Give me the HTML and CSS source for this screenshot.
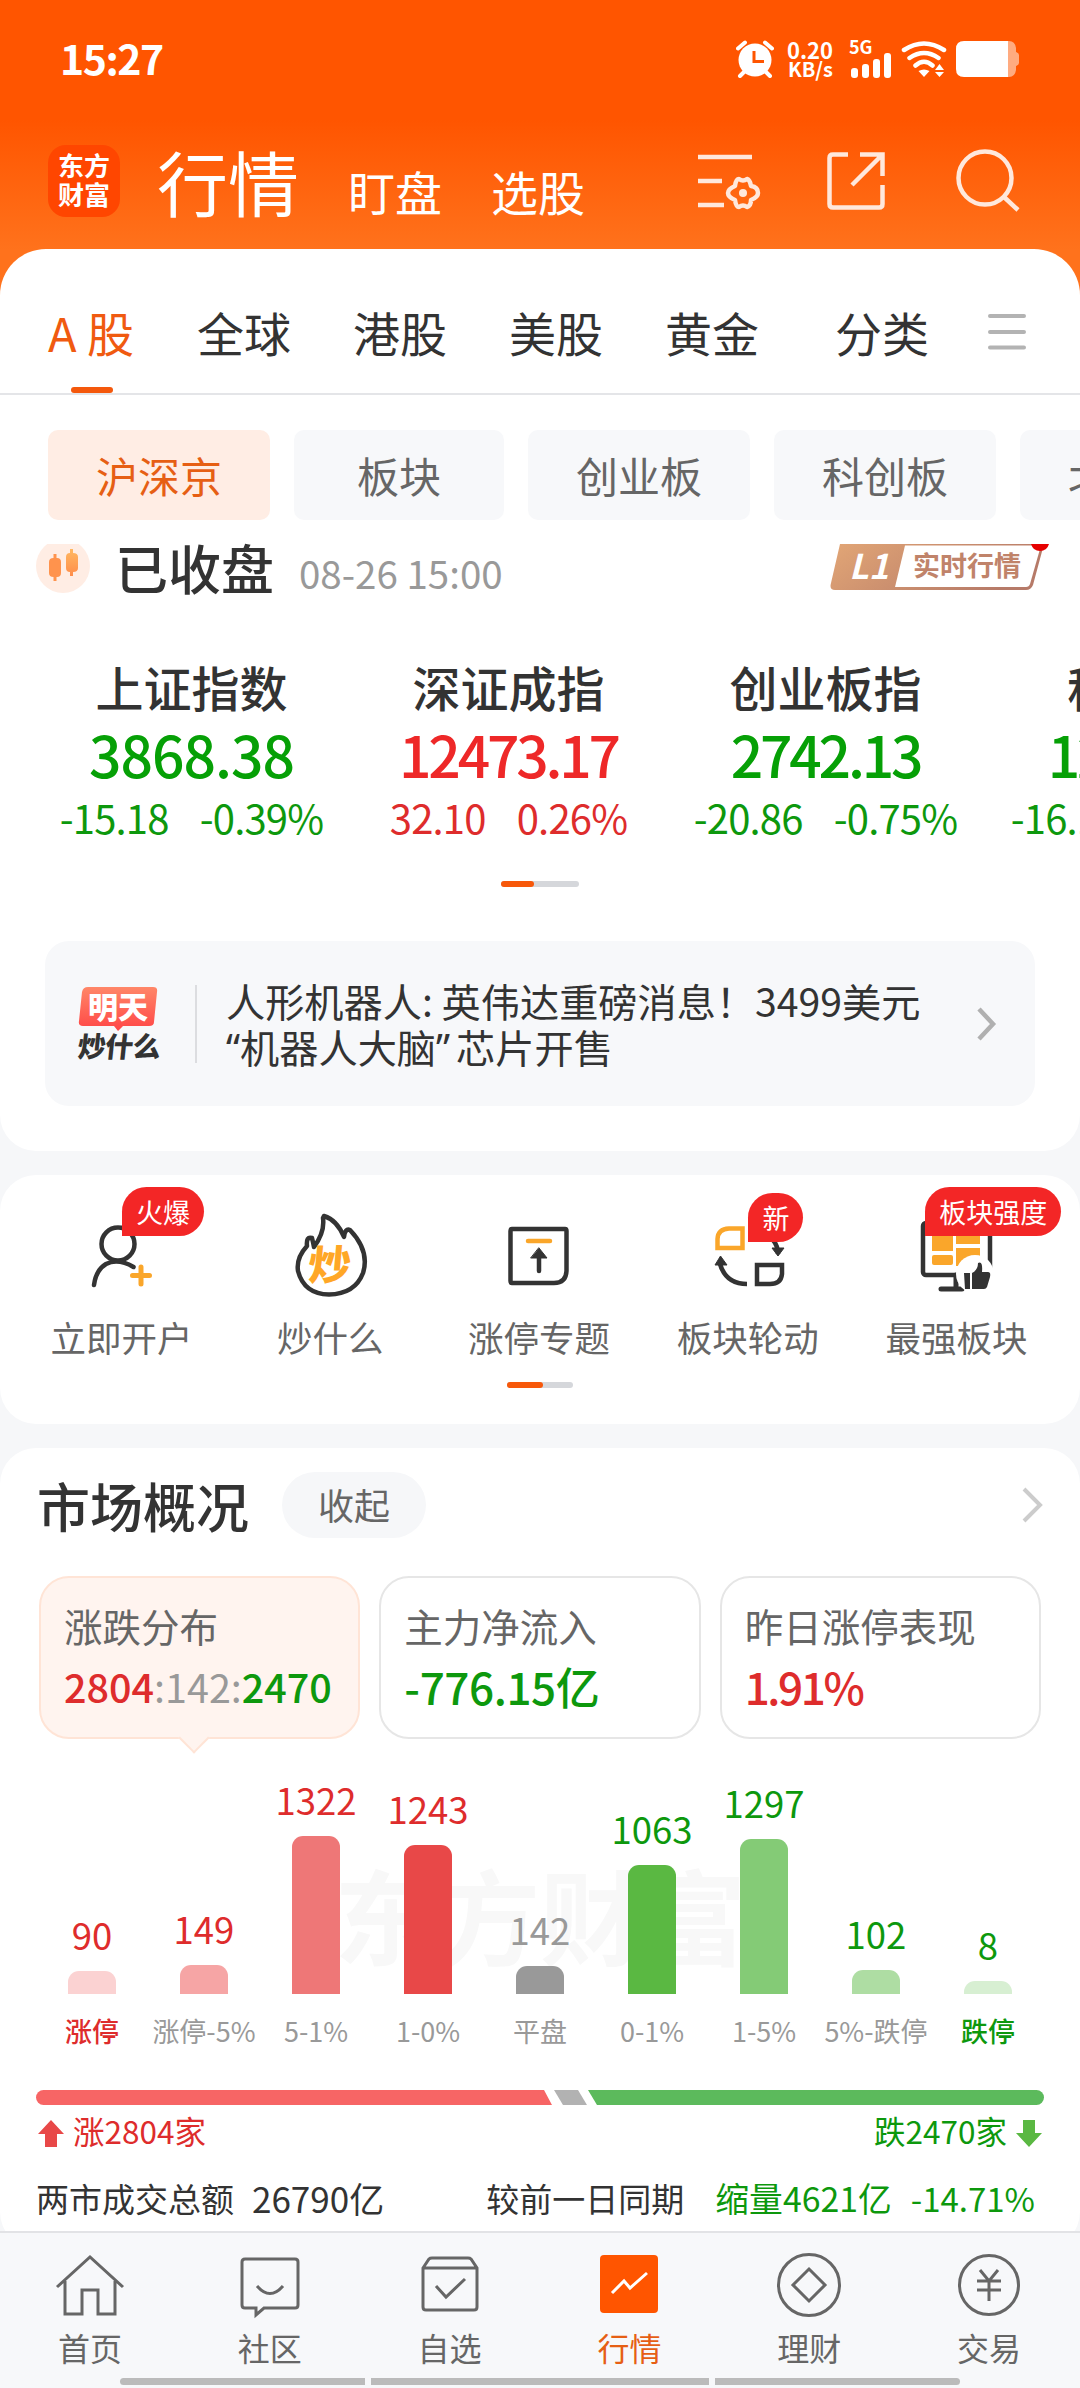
FILE: index.html
```html
<!DOCTYPE html>
<html lang="zh-CN">
  <head>
    <meta charset="utf-8">
    <title>行情</title>
    <link rel="stylesheet" href="styles.css">
  </head>
  <body>
    <header class="header">
      <div class="statusbar">
        <span class="clock">15:27</span>
        <div class="status-icons">
          <svg class="ic-alarm" width="38" height="38" viewBox="0 0 38 38">
            <circle cx="19" cy="20" r="16.500" fill="#fff"/>
            <path d="M2 8.500L9 2.500M36 8.500L29 2.500M8 32L4 36M30 32L34 36" stroke="#fff" stroke-width="4" stroke-linecap="round"/>
            <path d="M18 11V21.500H28" fill="none" stroke="#ff5500" stroke-width="3"/>
          </svg>
          <div class="speed"><div>0.20</div><div class="unit">KB/s</div></div>
          <div class="cell">
            <span>5G</span>
            <svg width="42" height="26" viewBox="0 0 42 26" fill="#fff">
              <rect x="2" y="16" width="7" height="10" rx="3"/>
              <rect x="13" y="12" width="7" height="14" rx="3"/>
              <rect x="24" y="7" width="7" height="19" rx="3"/>
              <rect x="35" y="1" width="7" height="25" rx="3"/>
            </svg>
          </div>
          <svg class="ic-wifi" width="46" height="38" viewBox="0 0 46 38">
            <path d="M3 10Q23 -3 43 10M8.500 18Q23 8 37.500 18M14.500 25.500Q23 18 31.500 25.500" fill="none" stroke="#fff" stroke-width="4.500" stroke-linecap="round"/>
            <path d="M17.500 31Q23 28 28.500 31L23 37ZM34 30L38.500 24L43 30ZM34 32L38.500 37L43 32Z" fill="#fff"/>
          </svg>
          <svg width="64" height="36" viewBox="0 0 64 36">
            <path d="M50 0H53Q59 0 60 7V11Q63 12 63 14V22Q63 24 60 25V29Q59 36 53 36H50Z" fill="#ffab80"/>
            <path d="M8 0H52V36H8Q0 36 0 28V8Q0 0 8 0Z" fill="#fff"/>
          </svg>
        </div>
      </div>
      <div class="titlebar">
        <div class="logo">东方<br>财富</div>
        <span class="title">行情</span>
        <span class="subtitle">盯盘</span>
        <span class="subtitle">选股</span>
        <svg class="ic-set" width="64" height="60" viewBox="0 0 64 60" fill="none" stroke="#ffe8dc" stroke-width="4.500">
          <path d="M0 6H54M0 30H24M0 54H26"/>
          <path d="M37 35Q38 28 41 28Q45 31 49 28Q52 29 53 35Q60 36 60 42Q60 46 53 49Q53 55 49 56Q45 53 41 56Q38 56 37 49Q30 46 30 42Q30 38 37 35Z" stroke-linejoin="round"/>
          <circle cx="45" cy="42" r="4" fill="#ffe8dc" stroke="none"/>
        </svg>
        <svg class="ic-share" width="60" height="60" viewBox="0 0 60 60" fill="none" stroke="#ffe8dc" stroke-width="4.500">
          <path d="M22 3.500H7Q3.500 3.500 3.500 7V53Q3.500 56.500 7 56.500H53Q56.500 56.500 56.500 53V34M34 3.500H56.500V25M56.500 3.500L26 34"/>
        </svg>
        <svg class="ic-search" width="66" height="66" viewBox="0 0 66 66" fill="none" stroke="#ffe8dc" stroke-width="4.500">
          <circle cx="30" cy="30" r="26.500"/>
          <path d="M49 49L63 62"/>
        </svg>
      </div>
    </header>

    <main>
      <section class="card card-index">
        <nav class="tabs">
          <span class="tab active">A 股</span>
          <span class="tab">全球</span>
          <span class="tab">港股</span>
          <span class="tab">美股</span>
          <span class="tab">黄金</span>
          <span class="tab last">分类</span>
          <svg class="menu" width="38" height="36" viewBox="0 0 38 36" stroke="#b3b3b3" stroke-width="4" stroke-linecap="round">
            <path d="M2 2H36M2 18H36M2 33.500H36"/>
          </svg>
        </nav>

        <div class="chips">
          <span class="chip active">沪深京</span>
          <span class="chip">板块</span>
          <span class="chip">创业板</span>
          <span class="chip">科创板</span>
          <span class="chip">北交所</span>
        </div>

        <div class="market-state">
          <svg class="candle" width="54" height="49" viewBox="0 5 54 49">
            <defs>
              <linearGradient id="cd" x1="0" y1="0" x2="0" y2="1">
                <stop offset="0" stop-color="#ffb861"/>
                <stop offset="1" stop-color="#ff8d4a"/>
              </linearGradient>
            </defs>
            <circle cx="27" cy="27" r="27" fill="#ffede4"/>
            <path d="M17.500 15h3v4h.5q4 0 4 4v11q0 4-4 4h-.5v4h-3v-4q-4.500 0-4.500-4V23q0-4 4.500-4Z" fill="#ff934d"/>
            <path d="M34 10h3v4q5 0 5 4v11q0 4-5 4v4h-3v-4q-4 0-4-4V18q0-4 4-4Z" fill="url(#cd)"/>
          </svg>
          <span class="state">已收盘</span>
          <span class="date">08-26 15:00</span>
          <div class="level">
            <svg width="220" height="46" viewBox="0 0 220 46">
              <defs>
                <linearGradient id="lv" x1="0" y1="0" x2="1" y2="0.300">
                  <stop offset="0" stop-color="#e2a676"/>
                  <stop offset="1" stop-color="#b67a68"/>
                </linearGradient>
              </defs>
              <path d="M10 0H214L203 41Q201 46 196 46H5Q-1 46 1 39Z" fill="url(#lv)"/>
              <path d="M75 1.500H211L200 40Q199 43 196 43H65Z" fill="#fff"/>
              <path d="M201 0H219Q217 7 210 7Q203 7 201 0Z" fill="#e60000"/>
            </svg>
            <span class="l1">L1</span>
            <span class="rt">实时行情</span>
          </div>
        </div>

        <div class="indices">
          <div class="index down">
            <div class="name">上证指数</div>
            <div class="value">3868.38</div>
            <div class="change"><span>-15.18</span><span>-0.39%</span></div>
          </div>
          <div class="index up">
            <div class="name">深证成指</div>
            <div class="value tight">12473.17</div>
            <div class="change"><span>32.10</span><span>0.26%</span></div>
          </div>
          <div class="index down">
            <div class="name">创业板指</div>
            <div class="value tight">2742.13</div>
            <div class="change"><span>-20.86</span><span>-0.75%</span></div>
          </div>
          <div class="index down">
            <div class="name">科创50</div>
            <div class="value tight">1270.87</div>
            <div class="change"><span>-16.10</span><span>-1.25%</span></div>
          </div>
        </div>
        <div class="pager"><i></i></div>

        <div class="news">
          <div class="news-logo">
            <svg width="80" height="46" viewBox="0 0 80 46">
              <defs>
                <linearGradient id="nl" x1="0" y1="0" x2="0" y2="1">
                  <stop offset="0" stop-color="#ff8768"/>
                  <stop offset="1" stop-color="#ff4646"/>
                </linearGradient>
              </defs>
              <path d="M10 0H75Q80 0 79 5L76 35Q76 39 71 39H45L40 44L36 39H5Q0 39 1 34L4 5Q5 0 10 0Z" fill="url(#nl)"/>
            </svg>
            <span class="t1">明天</span>
            <span class="t2">炒什么</span>
          </div>
          <div class="news-text">
            <div>人形机器人: 英伟达重磅消息！3499美元</div>
            <div><span class="q">“</span>机器人大脑<span class="q end">”</span>芯片开售</div>
          </div>
          <svg class="arrow" width="20" height="36" viewBox="0 0 20 36"><path d="M2 3L16 18L2 33" fill="none" stroke="#b0b0b0" stroke-width="4.500"/></svg>
        </div>
      </section>

      <section class="card card-tools">
        <div class="tools">
          <div class="tool">
            <svg width="90" height="90" viewBox="0 0 90 90" fill="none" stroke="#333" stroke-width="4.500" stroke-linecap="round">
              <circle cx="42" cy="34" r="16.500"/>
              <path d="M18 75Q20 60 30 54Q42 48 57.500 57"/>
              <path d="M65 57V74M56.500 65.500H73.500" stroke="#faa62a" stroke-width="5"/>
            </svg>
            <span class="label">立即开户</span>
            <span class="badge">火爆</span>
          </div>
          <div class="tool">
            <svg width="90" height="90" viewBox="0 0 90 90" fill="none" stroke="#333" stroke-width="4.500" stroke-linejoin="round" stroke-linecap="round">
              <path d="M39 6Q52 10 59 27Q60 18 65 20Q85 41 78 63Q70 84 44 84.500Q19 84 13 61Q11 48 22 36Q21 26 27 28Q28 32 29 37Q40 22 38 8Z"/>
              <text class="chao" transform="translate(22 70) skewX(-5) scale(1.040 1)" x="0" y="0">炒</text>
            </svg>
            <span class="label">炒什么</span>
          </div>
          <div class="tool">
            <svg width="90" height="90" viewBox="0 0 90 90" fill="none" stroke="#333" stroke-width="4.500" stroke-linecap="round">
              <path d="M18 19H71Q72.500 19 72.500 21V61Q72 73 60 73H18Q16.500 73 16.500 71V21Q16.500 19 18 19Z"/>
              <path d="M34 31H56" stroke="#faa62a"/>
              <path d="M45 43V61"/>
              <path d="M45 38L53 48H37Z" fill="#333" stroke-width="1"/>
            </svg>
            <span class="label">涨停专题</span>
          </div>
          <div class="tool">
            <svg width="90" height="90" viewBox="0 0 90 90" fill="none" stroke="#333" stroke-width="4.500">
              <path d="M39.500 18.500V38H14.500V29Q15 19 26 18.500Z" stroke="#faa62a"/>
              <path d="M54 55H79V64Q78 74 67 74H54Z"/>
              <path d="M17 54Q23 74 44 74M70 30Q75 36 75 44"/>
              <path d="M17.500 46L24 55H12ZM75 46L69 38H81Z" fill="#333" stroke-width="1"/>
            </svg>
            <span class="label">板块轮动</span>
            <span class="badge new">新</span>
          </div>
          <div class="tool">
            <svg width="90" height="90" viewBox="0 0 90 90">
              <rect x="11" y="13" width="67" height="52" rx="3" fill="none" stroke="#333" stroke-width="4.500"/>
              <path d="M20 18H41V41H20ZM44 18H68V34H44ZM44 38H68V56H44Z" fill="#faa62a"/>
              <rect x="20" y="45" width="21" height="10" rx="2" fill="#faa62a"/>
              <path d="M29 79H50M44 65V78" stroke="#333" stroke-width="5" stroke-linecap="round"/>
              <circle cx="63" cy="64" r="19" fill="#fff"/>
              <path d="M52 63h6v16h-5Z M60 63Q66 60 66 53Q71 50 70 62H76Q79 62 78 67L75 77Q74 79 72 79H60Z" fill="#333"/>
            </svg>
            <span class="label">最强板块</span>
            <span class="badge">板块强度</span>
          </div>
        </div>
        <div class="pager small"><i></i></div>
      </section>

      <section class="card card-market">
        <div class="market-head">
          <h2>市场概况</h2>
          <span class="fold">收起</span>
          <svg class="arrow" width="22" height="38" viewBox="0 0 22 38"><path d="M2 3L18 19L2 35" fill="none" stroke="#ccc" stroke-width="4"/></svg>
        </div>
        <div class="stats">
          <div class="stat active">
            <div class="k">涨跌分布</div>
            <div class="v ratio"><b class="up">2804</b><span>:142:</span><b class="down">2470</b></div>
          </div>
          <div class="stat">
            <div class="k">主力净流入</div>
            <div class="v down">-776.15亿</div>
          </div>
          <div class="stat">
            <div class="k">昨日涨停表现</div>
            <div class="v up tight">1.91%</div>
          </div>
        </div>

        <div class="chart">
          <div class="watermark">东方财富</div>
          <div class="col up"><span>90</span><i style="height: 23px; background: #fbd2d2"></i><em class="strong">涨停</em></div>
          <div class="col up"><span>149</span><i style="height: 29px; background: #f6a5a5"></i><em>涨停-5%</em></div>
          <div class="col up"><span>1322</span><i style="height: 158px; background: #ee7777"></i><em>5-1%</em></div>
          <div class="col up"><span>1243</span><i style="height: 149px; background: #e84848"></i><em>1-0%</em></div>
          <div class="col flat"><span>142</span><i style="height: 28px; background: #999"></i><em>平盘</em></div>
          <div class="col down"><span>1063</span><i style="height: 129px; background: #5ab842"></i><em>0-1%</em></div>
          <div class="col down"><span>1297</span><i style="height: 155px; background: #84cb76"></i><em>1-5%</em></div>
          <div class="col down"><span>102</span><i style="height: 24px; background: #aedda3"></i><em>5%-跌停</em></div>
          <div class="col down"><span>8</span><i style="height: 13px; background: #d7efd2"></i><em class="strong">跌停</em></div>
        </div>

        <div class="split">
          <i class="s-up"></i><i class="s-flat"></i><i class="s-down"></i>
        </div>
        <div class="split-text">
          <svg width="26" height="27" viewBox="0 0 26 27"><path d="M13 0L26 14H19V27H7V14H0Z" fill="#e84848"/></svg>
          <span class="up">涨2804家</span>
          <span class="down right">跌2470家</span>
          <svg width="26" height="27" viewBox="0 0 26 27"><path d="M13 27L26 13H19V0H7V13H0Z" fill="#5ab842"/></svg>
        </div>
        <div class="volume">
          <span>两市成交总额</span>
          <span class="amount">26790亿</span>
          <span class="prev">较前一日同期</span>
          <span class="down shrink">缩量4621亿</span>
          <span class="down">-14.71%</span>
        </div>
      </section>
    </main>

    <footer class="tabbar">
      <div class="items">
        <div class="item">
          <svg width="70" height="70" viewBox="0 0 70 70"><path d="M2 37L35 7L68 37M10 31V64H27V40H43V64H60V31"/></svg>
          <span>首页</span>
        </div>
        <div class="item">
          <svg width="70" height="70" viewBox="0 0 70 70"><path d="M10 9H60Q63 9 63 12V55Q63 58 60 58H29L21 65V58H10Q7 58 7 55V12Q7 9 10 9ZM22 36Q35 51 48 36"/></svg>
          <span>社区</span>
        </div>
        <div class="item">
          <svg width="70" height="70" viewBox="0 0 70 70"><path d="M8 18L14 9Q15 8 17 8H53Q55 8 56 9L62 18V57Q62 60 59 60H11Q8 60 8 57ZM8 18H62M21 36L31 47L50 29"/></svg>
          <span>自选</span>
        </div>
        <div class="item active">
          <svg width="70" height="70" viewBox="0 0 70 70"><rect x="6" y="5" width="58" height="58" rx="4" fill="#ff5500" stroke="none"/><path d="M18 43L30 31L36 38L53 23" stroke="#fff"/></svg>
          <span>行情</span>
        </div>
        <div class="item">
          <svg width="70" height="70" viewBox="0 0 70 70"><circle cx="35" cy="35" r="30.500"/><path d="M35 19L51 35L35 51L19 35Z"/></svg>
          <span>理财</span>
        </div>
        <div class="item">
          <svg width="70" height="70" viewBox="0 0 70 70"><circle cx="35" cy="35" r="29.500"/><path d="M26 20L35 31L44 20M35 31V51M23 31H47M23 40H47"/></svg>
          <span>交易</span>
        </div>
      </div>
      <div class="gesture"><i></i><i></i><i></i></div>
    </footer>
  </body>
</html>
```

FILE: styles.css
```css
* {
  box-sizing: border-box;
}

body {
  margin: 0;
  width: 1080px;
  height: 2388px;
  overflow: hidden;
  display: flex;
  flex-direction: column;
  background: #f6f7f9;
  color: #333;
  font-family: "Noto Sans CJK SC", sans-serif;
  white-space: nowrap;
}

svg {
  display: block;
  flex: none;
}

i,
em {
  font-style: normal;
}

.up {
  color: #de2c2c;
}

.down {
  color: #0d980d;
}

/* header */
.header {
  flex: none;
  height: 300px;
  color: #fff;
  background: linear-gradient(#ff5500 120px, #ff721c 250px);
}

.statusbar {
  height: 118px;
  padding: 0 60px;
  display: flex;
  align-items: center;
  justify-content: space-between;
}

.clock {
  font-size: 41px;
  font-weight: 700;
  line-height: 60px;
  letter-spacing: -1.5px;
  margin-top: -5px;
}

.status-icons {
  display: flex;
  align-items: center;
}

.speed {
  width: 47px;
  margin-left: 12px;
  text-align: right;
  font-size: 22px;
  font-weight: 700;
  line-height: 19px;
}

.speed .unit {
  font-size: 20px;
}

.cell {
  width: 42px;
  height: 38px;
  margin: 0 10px 0 16px;
  display: flex;
  flex-direction: column;
  font-size: 18px;
  font-weight: 700;
  line-height: 12px;
}

.ic-wifi {
  margin-right: 9px;
}

.titlebar {
  display: flex;
  align-items: center;
  height: 126px;
  padding-left: 48px;
}

.logo {
  width: 72px;
  height: 72px;
  border-radius: 18px;
  background: #ff4600;
  font-size: 26px;
  font-weight: 700;
  line-height: 29px;
  padding-top: 5px;
  text-align: center;
}

.title {
  margin: -3px 0 0 37px;
  font-size: 71px;
  line-height: 80px;
}

.subtitle {
  margin: 20px 0 0 49px;
  font-size: 47px;
  line-height: 60px;
}

.ic-set {
  margin-left: 113px;
}

.ic-share {
  margin-left: 64px;
}

.ic-search {
  margin-left: 69px;
}

/* cards */
main {
  flex: 1;
  margin-top: -51px;
  overflow: hidden;
}

.card {
  background: #fff;
  border-radius: 36px;
  overflow: hidden;
}

.card-index {
  height: 902px;
  border-radius: 46px 46px 36px 36px;
}

.tabs {
  height: 146px;
  padding-left: 48px;
  border-bottom: 2px solid #e4e5e8;
  display: flex;
  align-items: center;
  font-size: 47px;
  line-height: 60px;
}

.tab {
  width: 94px;
  margin: 21px 0 0 62px;
}

.tab.active {
  position: relative;
  margin-left: 0;
  width: 87px;
  color: #f05a10;
}

.tab.active::after {
  content: "";
  position: absolute;
  left: 23px;
  top: 85px;
  width: 42px;
  height: 6px;
  border-radius: 3px;
  background: #f4580c;
}

.tab.last {
  margin-left: 76px;
}

.menu {
  margin: 22px 0 0 59px;
}

.chips {
  display: flex;
  gap: 24px;
  padding: 35px 0 0 48px;
}

.chip {
  flex: none;
  min-width: 210px;
  padding: 0 48px;
  height: 90px;
  border-radius: 10px;
  background: #f7f8fa;
  color: #666;
  font-size: 42px;
  line-height: 89px;
  text-align: center;
}

.chip.active {
  background: #ffede4;
  color: #e65f14;
}

.market-state {
  display: flex;
  height: 50px;
  margin-top: 24px;
  padding: 0 30px 0 36px;
}

.state {
  margin-left: 25px;
  font-size: 53px;
  font-weight: 500;
  line-height: 46px;
}

.date {
  margin-left: 25px;
  color: #999;
  font-size: 38.500px;
  line-height: 57px;
}

.level {
  position: relative;
  margin-left: auto;
}

.l1,
.rt {
  position: absolute;
  line-height: 40px;
  font-weight: 700;
}

.l1 {
  left: 19px;
  top: 1px;
  color: #fff;
  font-size: 34px;
  font-style: italic;
}

.rt {
  left: 83px;
  top: 1px;
  color: #c0836a;
  font-size: 27px;
}

.indices {
  display: flex;
  padding: 60px 0 0 33px;
}

.index {
  flex: none;
  width: 317px;
  text-align: center;
}

.name {
  color: #333;
  font-size: 48px;
  font-weight: 500;
  line-height: 64px;
}

.value {
  font-size: 57px;
  font-weight: 500;
  line-height: 71px;
  letter-spacing: -1px;
}

.value.tight {
  letter-spacing: -3.2px;
}

.index.up .value {
  color: #ee2828;
}

.index.down .value {
  color: #06a006;
}

.change {
  display: flex;
  justify-content: center;
  gap: 31px;
  font-size: 40px;
  line-height: 56px;
  letter-spacing: -0.8px;
}

.pager {
  width: 78px;
  height: 6px;
  margin: 36px auto 0;
  border-radius: 3px;
  background: #d5d7db;
}

.pager i {
  display: block;
  width: 33px;
  height: 6px;
  border-radius: 3px;
  background: #f7580a;
}

.news {
  height: 165px;
  margin: 54px 45px 0;
  padding: 0 38px 0 32px;
  border-radius: 24px;
  background: #f7f8fa;
  display: flex;
  align-items: center;
}

.news-logo {
  position: relative;
  width: 84px;
  height: 74px;
}

.news-logo svg {
  margin-left: 1px;
}

.news-logo span {
  position: absolute;
  font-weight: 900;
}

.t1 {
  left: 11px;
  top: 1px;
  color: #fff;
  font-size: 30px;
  line-height: 34px;
}

.t2 {
  left: 1px;
  top: 42px;
  font-size: 28px;
  line-height: 32px;
  letter-spacing: -0.5px;
  transform: skewX(-6deg);
}

.news-text {
  height: 78px;
  margin-left: 34px;
  margin-right: auto;
  padding-left: 29px;
  border-left: 2px solid #dcdde0;
  font-size: 39.200px;
  line-height: 46px;
}

.news-text div:first-child {
  margin-top: -8px;
}

.q {
  font-family: "Noto Sans", sans-serif;
}

.q.end {
  margin-right: 6px;
}

/* tools */
.card-tools {
  height: 249px;
  margin-top: 24px;
  padding-top: 35px;
}

.tools {
  display: flex;
  padding-left: 17px;
}

.tool {
  position: relative;
  width: 208.800px;
  display: flex;
  flex-direction: column;
  align-items: center;
}

.label {
  margin-top: 11px;
  color: #666;
  font-size: 35.500px;
  line-height: 52px;
}

.chao {
  fill: #ffa726;
  stroke: none;
  font-size: 41px;
  font-weight: 900;
}

.badge {
  position: absolute;
  left: 105px;
  top: -23px;
  height: 49px;
  padding: 0 14px;
  border-radius: 25px 25px 25px 0;
  background: #f32626;
  color: #fff;
  font-size: 27px;
  line-height: 49px;
}

.badge.new {
  top: -17px;
}

.tool:last-child .badge {
  left: 73px;
}

.pager.small {
  width: 66px;
  margin-top: 19px;
}

.pager.small i {
  width: 36px;
}

/* market overview */
.card-market {
  height: 800px;
  margin-top: 24px;
}

.market-head {
  display: flex;
  align-items: center;
  height: 114px;
  padding: 0 36px 0 37px;
}

.market-head h2 {
  margin: 0;
  font-size: 53px;
  font-weight: 500;
}

.fold {
  width: 144px;
  height: 66px;
  margin-left: 33px;
  border-radius: 33px;
  background: #f6f7f9;
  color: #666;
  text-align: center;
  font-size: 36px;
  line-height: 64px;
}

.market-head .arrow {
  margin-left: auto;
}

.stats {
  display: flex;
  gap: 19px;
  padding: 14px 39px 0;
}

.stat {
  flex: 1;
  position: relative;
  height: 163px;
  padding: 17px 0 0 23px;
  border: 2px solid #e6e6e6;
  border-radius: 30px;
}

.stat.active {
  background: #fff4ef;
  border-color: #ffe4d6;
}

.stat.active::after {
  content: "";
  position: absolute;
  left: 142px;
  bottom: -12px;
  width: 20px;
  height: 20px;
  border: solid #ffe4d6;
  border-width: 0 2px 2px 0;
  background: #fff4ef;
  transform: rotate(45deg);
}

.k {
  color: #666;
  font-size: 38.500px;
  line-height: 60px;
}

.v {
  font-size: 44px;
  font-weight: 500;
  line-height: 62px;
  letter-spacing: -0.4px;
}

.v.tight {
  letter-spacing: -2.4px;
}

.v.ratio {
  font-size: 39.500px;
  letter-spacing: 0;
}

.v b {
  font-weight: 500;
}

.v.ratio span {
  color: #999;
  font-weight: 400;
}

.chart {
  position: relative;
  height: 312px;
  padding: 0 36px;
  display: flex;
  align-items: flex-end;
}

.watermark {
  position: absolute;
  left: 334px;
  top: 115px;
  color: #f8f8f8;
  font-size: 103px;
  font-weight: 700;
  line-height: 120px;
}

.col {
  position: relative;
  width: 112px;
  display: flex;
  flex-direction: column;
  align-items: center;
}

.col span {
  font-size: 36.500px;
  line-height: 50px;
  margin-bottom: 11px;
}

.col i {
  width: 48px;
  border-radius: 11px 11px 0 0;
}

.col em {
  margin-top: 17px;
  color: #999;
  font-size: 27px;
  line-height: 40px;
}

.col.flat {
  color: #999;
}

.col .strong {
  color: inherit;
  font-weight: 500;
}

.split {
  display: flex;
  height: 15px;
  margin: 39px 36px 0;
}

.split i {
  height: 15px;
}

.s-up {
  width: 516px;
  border-radius: 8px 0 0 8px;
  background: #f76565;
  clip-path: polygon(0 0, 508px 0, 100% 100%, 0 100%);
}

.s-flat {
  width: 33px;
  margin-left: 2px;
  background: #b2b2b2;
  clip-path: polygon(0 0, 24px 0, 100% 100%, 9px 100%);
}

.s-down {
  flex: 1;
  margin-left: 1px;
  border-radius: 0 8px 8px 0;
  background: #5cba5c;
  clip-path: polygon(0 0, 100% 0, 100% 100%, 9px 100%);
}

.split-text {
  display: flex;
  align-items: center;
  gap: 9px;
  height: 56px;
  padding: 0 38px;
  font-size: 31.500px;
  line-height: 50px;
}

.split-text .right {
  margin-left: auto;
}

.split-text span {
  margin-top: -6px;
}

.volume {
  display: flex;
  align-items: center;
  margin-top: 12px;
  padding: 0 45px 0 36px;
  font-size: 33px;
  line-height: 50px;
}

.amount {
  margin-left: 18px;
  font-size: 35px;
}

.prev {
  margin-left: auto;
}

.shrink {
  margin: 0 19px 0 31px;
  font-size: 33.800px;
}

/* bottom bar */
.tabbar {
  flex: none;
  height: 157px;
  background: #f7f8fa;
  border-top: 2px solid #e2e3e6;
}

.items {
  display: flex;
  height: 145px;
  padding: 17px 1px 0 0;
}

.item {
  flex: 1;
  display: flex;
  flex-direction: column;
  align-items: center;
  color: #666;
  font-size: 32px;
  line-height: 44px;
}

.item svg {
  fill: none;
  stroke: #666;
  stroke-width: 3;
}

.item span {
  margin-top: 5px;
}

.item.active {
  color: #e65f14;
}

.gesture {
  display: flex;
  gap: 6px;
  padding: 0 120px;
}

.gesture i {
  width: 245px;
  height: 7px;
  border-radius: 4px 0 0 4px;
  background: #bbb;
}

.gesture i:nth-child(2) {
  flex: 1;
  border-radius: 0;
}

.gesture i:last-child {
  border-radius: 0 4px 4px 0;
}
```
